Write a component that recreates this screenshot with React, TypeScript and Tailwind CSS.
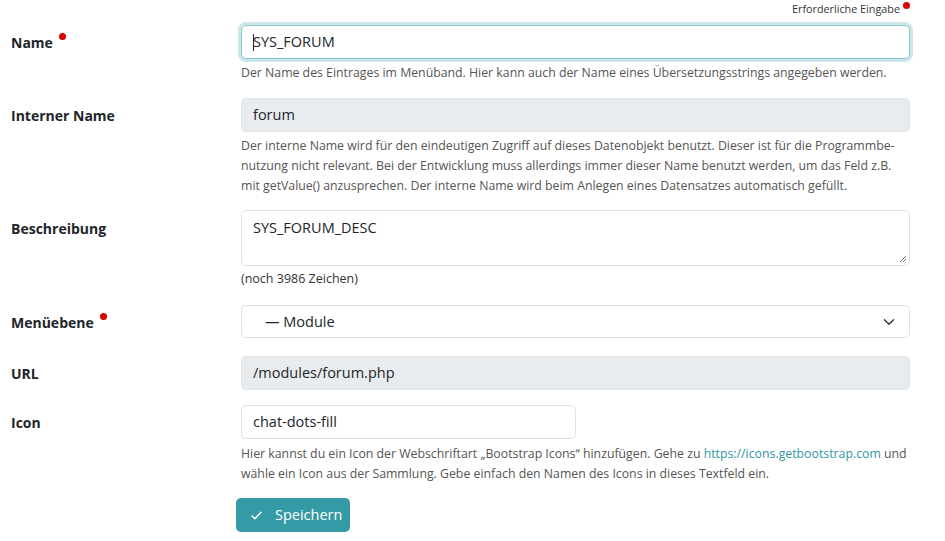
import React from "react";

const font = { fontFamily: '"Open Sans", "Noto Sans", sans-serif' };

function Dot() {
  return <span className="inline-block w-[7px] h-[7px] rounded-full bg-[#d90000] ml-[6px] -translate-y-[6px]" />;
}

function Label({ children, req }: { children: React.ReactNode; req?: boolean }) {
  return (
    <div className="w-[241px] shrink-0 pl-[11px] flex items-center h-[34px] text-[14px] font-bold text-[#212529]">
      <span>{children}</span>
      {req && <Dot />}
    </div>
  );
}

const help = "text-[12.3px] leading-[20px] text-[#555] whitespace-nowrap";

export default function App() {
  return (
    <div className="w-[945px] h-[541px] bg-white text-[#212529] relative overflow-hidden" style={font}>
      <div className="flex justify-end pr-[35px] h-[25px] pt-[1px]">
        <span className="text-[10.8px] text-[#333] leading-[16px]">Erforderliche Eingabe</span>
        <span className="inline-block w-[7px] h-[7px] rounded-full bg-[#d90000] ml-[3px] mt-[1px]" />
      </div>

      {/* Name */}
      <div className="flex">
        <Label req>Name</Label>
        <div className="w-[669px]">
          <div className="h-[34px] rounded-[5px] border border-[#86c6cf] shadow-[0_0_0_3px_rgba(52,154,166,0.25)] px-[11px] flex items-center text-[14.5px]">
            <span className="w-px h-[17px] bg-[#222] -mr-px" />
            <span>SYS_FORUM</span>
          </div>
          <div className={"mt-[4px] " + help}>
            Der Name des Eintrages im Menüband. Hier kann auch der Name eines Übersetzungsstrings angegeben werden.
          </div>
        </div>
      </div>

      {/* Interner Name */}
      <div className="flex mt-[15px]">
        <Label>Interner Name</Label>
        <div className="w-[669px]">
          <div className="h-[34px] rounded-[5px] border border-[#e2e5e8] bg-[#e9ecef] px-[11px] flex items-center text-[14.5px]">
            forum
          </div>
          <div className={"mt-[4px] " + help}>
            Der interne Name wird für den eindeutigen Zugriff auf dieses Datenobjekt benutzt. Dieser ist für die Programmbe-
            <br />
            nutzung nicht relevant. Bei der Entwicklung muss allerdings immer dieser Name benutzt werden, um das Feld z.B.
            <br />
            mit getValue() anzusprechen. Der interne Name wird beim Anlegen eines Datensatzes automatisch gefüllt.
          </div>
        </div>
      </div>

      {/* Beschreibung */}
      <div className="flex mt-[14px]">
        <div className="w-[241px] shrink-0 pl-[11px] pt-[8px] text-[14px] font-bold">Beschreibung</div>
        <div className="w-[669px]">
          <div className="h-[56px] rounded-[5px] border border-[#dee2e6] px-[11px] pt-[6px] text-[14.5px] relative">
            SYS_FORUM_DESC
            <svg className="absolute right-[2px] bottom-[2px]" width="8" height="8" viewBox="0 0 8 8">
              <path d="M7 1 L1 7 M7 4 L4 7" stroke="#777" strokeWidth="1" />
            </svg>
          </div>
          <div className="mt-[3px] text-[12.5px] leading-[20px] text-[#333]">(noch 3986 Zeichen)</div>
        </div>
      </div>

      {/* Menüebene */}
      <div className="flex mt-[16px]">
        <Label req>Menüebene</Label>
        <div className="w-[669px]">
          <div className="h-[33px] rounded-[5px] border border-[#dee2e6] pl-[23px] pr-[14px] flex items-center justify-between text-[14.5px]">
            <span>— Module</span>
            <svg width="12" height="12" viewBox="0 0 16 16">
              <path d="M2 5l6 6 6-6" fill="none" stroke="#343a40" strokeWidth="2" strokeLinecap="round" strokeLinejoin="round" />
            </svg>
          </div>
        </div>
      </div>

      {/* URL */}
      <div className="flex mt-[17px]">
        <Label>URL</Label>
        <div className="w-[669px]">
          <div className="h-[34px] rounded-[5px] border border-[#e2e5e8] bg-[#e9ecef] px-[11px] flex items-center text-[14.5px]">
            /modules/forum.php
          </div>
        </div>
      </div>

      {/* Icon */}
      <div className="flex mt-[15px]">
        <Label>Icon</Label>
        <div className="w-[669px]">
          <div className="w-[335px] h-[34px] rounded-[5px] border border-[#dee2e6] px-[11px] flex items-center text-[14.5px]">
            chat-dots-fill
          </div>
          <div className={"mt-[5px] " + help}>
            Hier kannst du ein Icon der Webschriftart „Bootstrap Icons“ hinzufügen. Gehe zu{" "}
            <span className="text-[#2f96a3]">https://icons.getbootstrap.com</span> und
            <br />
            wähle ein Icon aus der Sammlung. Gebe einfach den Namen des Icons in dieses Textfeld ein.
          </div>
        </div>
      </div>

      {/* Button */}
      <div className="pl-[236px] mt-[14px]">
        <button className="h-[34px] w-[114px] rounded-[5px] bg-[#349aa6] text-white text-[14.5px] flex items-center pl-[14px] gap-[12px]">
          <svg width="13" height="13" viewBox="0 0 16 16">
            <path d="M2.5 8.5l3.5 3.5 7.5-8" fill="none" stroke="white" strokeWidth="1.8" strokeLinecap="round" strokeLinejoin="round" />
          </svg>
          <span>Speichern</span>
        </button>
      </div>
    </div>
  );
}
